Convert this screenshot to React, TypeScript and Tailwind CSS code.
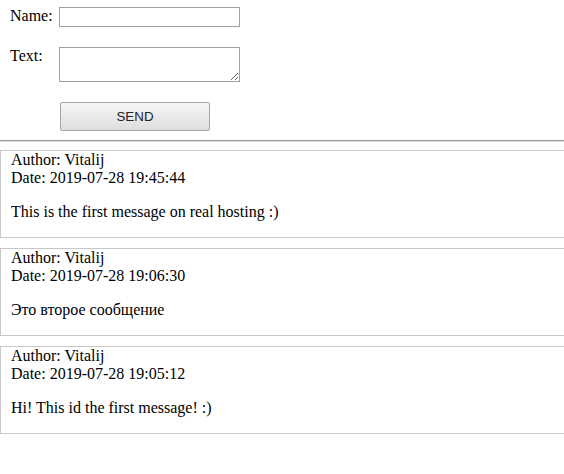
const messages = [
  { author: 'Vitalij', date: '2019-07-28 19:45:44', text: 'This is the first message on real hosting :)' },
  { author: 'Vitalij', date: '2019-07-28 19:06:30', text: 'Это второе сообщение' },
  { author: 'Vitalij', date: '2019-07-28 19:05:12', text: 'Hi! This id the first message! :)' },
];

export default function App() {
  return (
    <div
      className="w-[564px] h-[474px] overflow-hidden bg-white text-black text-[16px] leading-[18px]"
      style={{ fontFamily: '"Liberation Serif", "Times New Roman", serif' }}
    >
      <form className="pl-[10px] pt-[7px]" onSubmit={(e) => e.preventDefault()}>
        <div className="flex">
          <label className="w-[49px]">Name:</label>
          <input type="text" className="w-[181px] h-[20px] border border-[#a0a0a0] bg-white outline-none" />
        </div>
        <div className="flex mt-[20px]">
          <label className="w-[49px]">Text:</label>
          <textarea className="w-[181px] h-[35px] border border-[#a0a0a0] bg-white outline-none resize" />
        </div>
        <button
          type="submit"
          className="ml-[50px] mt-[20px] w-[150px] h-[29px] border border-[#a6a6a6] rounded-[2px] bg-gradient-to-b from-[#f6f6f6] to-[#dedede] text-[13.33px] text-[#222]"
          style={{ fontFamily: '"Liberation Sans", Arial, sans-serif' }}
        >
          SEND
        </button>
      </form>
      <div className="mt-[9px] border-t border-b border-t-[#9a9a9a] border-b-[#dcdcdc]" />
      <div className="mt-[8px] flex flex-col gap-[10px]">
        {messages.map((m, i) => (
          <div key={i} className="w-[600px] border border-[#c8c8c8] pl-[10px]">
            <div>Author: {m.author}</div>
            <div>Date: {m.date}</div>
            <p className="my-[16px]">{m.text}</p>
          </div>
        ))}
      </div>
    </div>
  );
}
